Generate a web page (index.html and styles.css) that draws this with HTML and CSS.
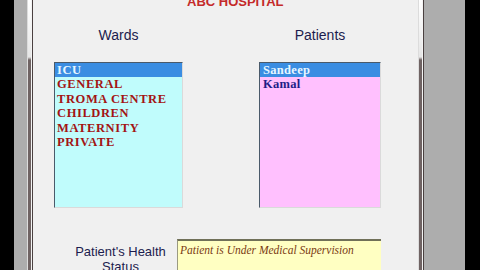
FILE: index.html
```html
<!DOCTYPE html>
<html>
<head>
<meta charset="utf-8">
<link rel="stylesheet" href="styles.css">
</head>
<body>
<div class="screen">
  <div class="black"></div>
  <div class="gray gray-left"></div>
  <div class="frame">
    <div class="s s1"></div><div class="s s2"></div><div class="s s3"></div><div class="s s4"></div>
  </div>
  <div class="content">
    <div class="title">ABC HOSPITAL</div>
    <div class="heads">
      <div class="head">Wards</div>
      <div class="head">Patients</div>
    </div>
    <div class="lists">
      <ul class="list wards">
        <li class="sel">ICU</li>
        <li>GENERAL</li>
        <li>TROMA CENTRE</li>
        <li>CHILDREN</li>
        <li>MATERNITY</li>
        <li>PRIVATE</li>
      </ul>
      <ul class="list patients">
        <li class="sel">Sandeep</li>
        <li>Kamal</li>
      </ul>
    </div>
    <div class="status">
      <div class="status-label">Patient's Health<br>Status</div>
      <div class="status-box">Patient is Under Medical Supervision</div>
    </div>
  </div>
  <div class="frame">
    <div class="s s1"></div><div class="s s2"></div><div class="s s3"></div><div class="s s4"></div>
  </div>
  <div class="gray gray-right"></div>
  <div class="black"></div>
</div>
</body>
</html>
```
FILE: styles.css
```css
html, body {
  margin: 0;
  padding: 0;
  width: 480px;
  height: 270px;
  overflow: hidden;
  background: #000;
}
.screen {
  display: flex;
  width: 480px;
  height: 270px;
  overflow: hidden;
}
.black {
  width: 14px;
  background: #000;
  flex: none;
}
.gray {
  background: #adadad;
  flex: none;
}
.gray-left { width: 13px; }
.gray-right { width: 41px; }
.frame {
  display: flex;
  flex: none;
}
.s { height: 100%; }
.s1 { width: 1px; background: #dcdcdc; }
.s2 { width: 3px; background: linear-gradient(to bottom, #ffffff 0, #e6e6e6 57px, #6f6363 60px, #6f6363 100%); }
.s3 { width: 1px; background: #f4f4f4; }
.s4 { width: 1px; background: #4a4040; }
.content {
  flex: none;
  width: 385px;
  background: #f0f0f0;
  display: flex;
  flex-direction: column;
  padding-left: 21px;
  box-sizing: border-box;
  font-family: "Liberation Sans", Arial, sans-serif;
}
.title {
  margin-top: -5px;
  margin-left: 133px;
  height: 13px;
  line-height: 13px;
  font-size: 13px;
  font-weight: bold;
  color: #c42a2a;
  white-space: nowrap;
}
.heads {
  display: grid;
  grid-template-columns: 129px 122px;
  column-gap: 76px;
  margin-top: 19px;
}
.head {
  text-align: center;
  font-size: 14px;
  line-height: 16px;
  color: #1c1c4e;
}
.lists {
  display: grid;
  grid-template-columns: 129px 122px;
  column-gap: 76px;
  margin-top: 19px;
}
.list {
  list-style: none;
  margin: 0;
  padding: 0;
  height: 146px;
  box-sizing: border-box;
  border: 1px solid;
  border-color: #4a5a6a #dadada #dadada #4a5a6a;
  font-family: "Liberation Serif", "Times New Roman", serif;
  font-weight: bold;
  font-size: 12.5px;
  letter-spacing: 0.6px;
  line-height: 14.5px;
}
.list li {
  padding-left: 2px;
  white-space: nowrap;
}
.wards { background: #c0fcfc; color: #a31414; }
.patients { background: #ffc0fe; color: #1e1e86; letter-spacing: 0.3px; }
.patients li { padding-left: 3px; }
.list li.sel {
  background: #3a8de2;
  color: #e6f6ff;
  height: 14px;
}
.status {
  display: flex;
  margin-top: 31px;
}
.status-label {
  width: 123px;
  padding-left: 10px;
  box-sizing: border-box;
  text-align: center;
  font-size: 13px;
  line-height: 15px;
  color: #1c1c4e;
  margin-top: 5px;
}
.status-box {
  width: 204px;
  height: 50px;
  box-sizing: border-box;
  background: #ffffc2;
  border-top: 2px solid #707058;
  border-left: 1px solid #9a9a80;
  padding: 2px 0 0 2px;
  font-family: "Liberation Serif", "Times New Roman", serif;
  font-style: italic;
  font-size: 11.5px;
  line-height: 14px;
  color: #7a3a12;
  white-space: nowrap;
}
```
